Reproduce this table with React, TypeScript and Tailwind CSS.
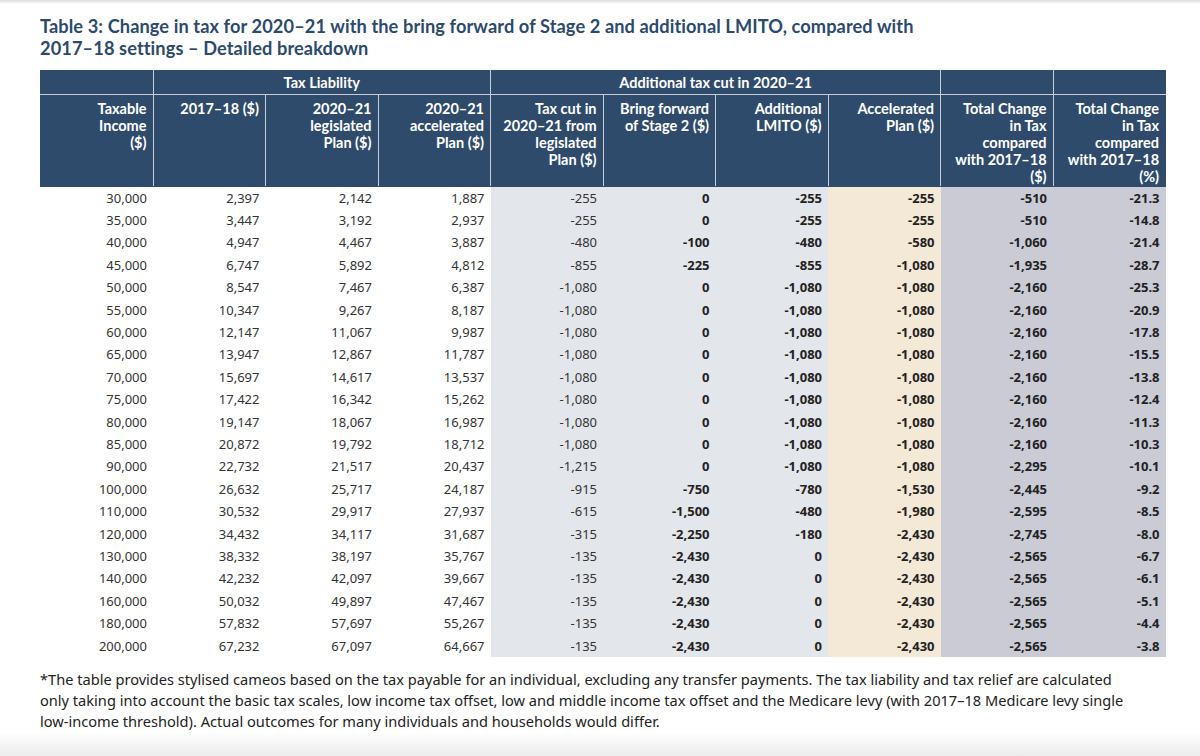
import React from 'react';

const rows: string[][] = [
  ['30,000', '2,397', '2,142', '1,887', '-255', '0', '-255', '-255', '-510', '-21.3'],
  ['35,000', '3,447', '3,192', '2,937', '-255', '0', '-255', '-255', '-510', '-14.8'],
  ['40,000', '4,947', '4,467', '3,887', '-480', '-100', '-480', '-580', '-1,060', '-21.4'],
  ['45,000', '6,747', '5,892', '4,812', '-855', '-225', '-855', '-1,080', '-1,935', '-28.7'],
  ['50,000', '8,547', '7,467', '6,387', '-1,080', '0', '-1,080', '-1,080', '-2,160', '-25.3'],
  ['55,000', '10,347', '9,267', '8,187', '-1,080', '0', '-1,080', '-1,080', '-2,160', '-20.9'],
  ['60,000', '12,147', '11,067', '9,987', '-1,080', '0', '-1,080', '-1,080', '-2,160', '-17.8'],
  ['65,000', '13,947', '12,867', '11,787', '-1,080', '0', '-1,080', '-1,080', '-2,160', '-15.5'],
  ['70,000', '15,697', '14,617', '13,537', '-1,080', '0', '-1,080', '-1,080', '-2,160', '-13.8'],
  ['75,000', '17,422', '16,342', '15,262', '-1,080', '0', '-1,080', '-1,080', '-2,160', '-12.4'],
  ['80,000', '19,147', '18,067', '16,987', '-1,080', '0', '-1,080', '-1,080', '-2,160', '-11.3'],
  ['85,000', '20,872', '19,792', '18,712', '-1,080', '0', '-1,080', '-1,080', '-2,160', '-10.3'],
  ['90,000', '22,732', '21,517', '20,437', '-1,215', '0', '-1,080', '-1,080', '-2,295', '-10.1'],
  ['100,000', '26,632', '25,717', '24,187', '-915', '-750', '-780', '-1,530', '-2,445', '-9.2'],
  ['110,000', '30,532', '29,917', '27,937', '-615', '-1,500', '-480', '-1,980', '-2,595', '-8.5'],
  ['120,000', '34,432', '34,117', '31,687', '-315', '-2,250', '-180', '-2,430', '-2,745', '-8.0'],
  ['130,000', '38,332', '38,197', '35,767', '-135', '-2,430', '0', '-2,430', '-2,565', '-6.7'],
  ['140,000', '42,232', '42,097', '39,667', '-135', '-2,430', '0', '-2,430', '-2,565', '-6.1'],
  ['160,000', '50,032', '49,897', '47,467', '-135', '-2,430', '0', '-2,430', '-2,565', '-5.1'],
  ['180,000', '57,832', '57,697', '55,267', '-135', '-2,430', '0', '-2,430', '-2,565', '-4.4'],
  ['200,000', '67,232', '67,097', '64,667', '-135', '-2,430', '0', '-2,430', '-2,565', '-3.8'],
];

const headers: React.ReactNode[] = [
  <>Taxable<br />Income<br />($)</>,
  <>2017–18 ($)</>,
  <>2020–21<br />legislated<br />Plan ($)</>,
  <>2020–21<br />accelerated<br />Plan ($)</>,
  <>Tax cut in<br />2020–21 from<br />legislated<br />Plan ($)</>,
  <>Bring forward<br />of Stage 2 ($)</>,
  <>Additional<br />LMITO ($)</>,
  <>Accelerated<br />Plan ($)</>,
  <>Total Change<br />in Tax<br />compared<br />with 2017–18<br />($)</>,
  <>Total Change<br />in Tax<br />compared<br />with 2017–18<br />(%)</>,
];

// column shading, written out so tailwind picks them up
const colBg = [
  '',
  '',
  '',
  '',
  'bg-[#e3e6eb]',
  'bg-[#e3e6eb]',
  'bg-[#e3e6eb]',
  'bg-[#f4e8d6]',
  'bg-[#cbcbd5]',
  'bg-[#cbcbd5]',
];

const headFont = { fontFamily: 'Lato, "Noto Sans", sans-serif' };

export default function App() {
  return (
    <div className="relative h-[756px] w-[1200px] overflow-hidden bg-white">
      <div className="h-[4px] bg-gradient-to-b from-[#dcdcdc] to-white" />

      <div className="px-[40px] pt-[11px]">
        <h1
          className="text-[18.2px] font-bold leading-[22px] tracking-[0.1px] text-[#2c4a6c]"
          style={headFont}
        >
          Table 3: Change in tax for 2020–21 with the bring forward of Stage 2 and additional LMITO, compared with
          <br />
          2017–18 settings – Detailed breakdown
        </h1>

        <table className="mt-[11px] w-[1125px] table-fixed border-collapse">
          <colgroup>
            {headers.map((_, i) => (
              <col key={i} className="w-[112.5px]" />
            ))}
          </colgroup>
          <thead className="bg-[#2e4b6c] text-white" style={headFont}>
            <tr className="h-[24px] text-[14.5px] font-extrabold">
              <th className="border border-[#c6cfd9] border-t-[#2e4b6c] border-l-[#2e4b6c]" />
              <th colSpan={3} className="border border-[#c6cfd9] border-t-[#2e4b6c] text-center">
                Tax Liability
              </th>
              <th colSpan={4} className="border border-[#c6cfd9] border-t-[#2e4b6c] text-center">
                Additional tax cut in 2020–21
              </th>
              <th className="border border-[#c6cfd9] border-t-[#2e4b6c]" />
              <th className="border border-[#c6cfd9] border-t-[#2e4b6c] border-r-[#2e4b6c]" />
            </tr>
            <tr className="h-[92px] text-[14.5px] font-extrabold leading-[17px]">
              {headers.map((h, i) => (
                <th
                  key={i}
                  className={`border border-[#c6cfd9] border-b-[#2e4b6c] pt-[5px] pr-[6px] text-right align-top ${
                    i === 0 ? 'border-l-[#2e4b6c]' : ''
                  } ${i === 9 ? 'border-r-[#2e4b6c]' : ''}`}
                >
                  {h}
                </th>
              ))}
            </tr>
          </thead>
          <tbody style={{ fontFamily: '"Noto Sans", "Open Sans", sans-serif' }}>
            {rows.map((r, ri) => (
              <tr key={ri} className="h-[22.4px] text-[13px] leading-[16px]">
                {r.map((v, ci) => (
                  <td
                    key={ci}
                    className={`pr-[6px] text-right ${colBg[ci]} ${
                      ci >= 5 ? 'font-bold text-[#222]' : 'text-[#333]'
                    }`}
                  >
                    {v}
                  </td>
                ))}
              </tr>
            ))}
          </tbody>
        </table>

        <p
          className="mt-[12px] w-[1100px] text-[14.6px] leading-[21px] text-[#222]"
          style={{ fontFamily: '"Noto Sans", "Open Sans", sans-serif' }}
        >
          *The table provides stylised cameos based on the tax payable for an individual, excluding any transfer
          payments. The tax liability and tax relief are calculated only taking into account the basic tax scales, low
          income tax offset, low and middle income tax offset and the Medicare levy (with 2017–18 Medicare levy single
          low-income threshold). Actual outcomes for many individuals and households would differ.
        </p>
      </div>

      <div className="pointer-events-none absolute bottom-0 left-0 h-[24px] w-full bg-gradient-to-b from-white/0 to-[#ececec]" />
    </div>
  );
}
